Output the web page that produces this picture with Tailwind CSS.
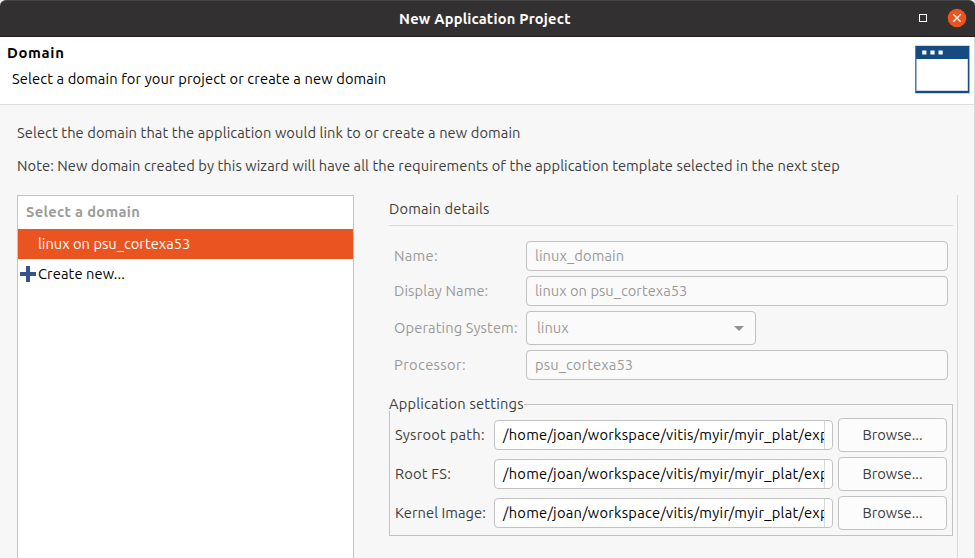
<!DOCTYPE html>
<html lang="en">
<head>
<meta charset="utf-8">
<title>New Application Project</title>
<script src="https://cdn.jsdelivr.net/npm/@tailwindcss/browser@4"></script>
</head>
<body class="w-[975px] h-[558px] overflow-hidden bg-[#f7f7f7] font-['Ubuntu','Noto_Sans',sans-serif] text-[14.667px] leading-5 text-[#3d3d3d] whitespace-nowrap">
<div class="flex flex-col h-[558px] border-r border-[#dadada]">
  <header class="-mr-px h-[37px] shrink-0 flex items-center bg-[#333031] border-t border-t-[#454545] border-b border-b-[#1f1d1e] rounded-t-[6px]">
    <div class="w-[399px] shrink-0"></div>
    <h1 class="grow font-bold text-white tracking-[0.21px]">New Application Project</h1>
    <svg class="w-[60px] h-[35px] shrink-0" viewBox="0 0 60 35" fill="none"><rect x="4.5" y="13.5" width="7" height="7" stroke="#fff"/><circle cx="42" cy="17" r="9.3" fill="#e95420"/><path d="M38.3 13.3l7.4 7.4M45.7 13.3l-7.4 7.4" stroke="#fff" stroke-width="1.3"/></svg>
  </header>
  <section class="h-[68px] shrink-0 flex justify-between bg-white border-b border-[#dcdcdc] text-black">
    <div class="pt-[6px] pl-[7px]">
      <h2 class="font-bold text-[14.9px] leading-5 tracking-[0.65px]">Domain</h2>
      <p class="pl-[5px] pt-[6px] tracking-[0.125px]">Select a domain for your project or create a new domain</p>
    </div>
    <svg class="w-[60px] h-[60px]" viewBox="0 0 60 60" fill="none"><rect x="1" y="8.5" width="55" height="48" fill="#9bb3cf"/><rect x="1.5" y="9" width="53.5" height="47" fill="#164b81"/><rect x="2" y="22" width="52" height="32" fill="#9bb3cf"/><rect x="3" y="22" width="50.5" height="31.5" fill="#fff"/><path d="M8.2 13.4h4.2v4.2h-4.2zM16.4 13.4h4.2v4.2h-4.2zM24.5 13.4h4.2v4.2h-4.2z" fill="#fff"/></svg>
  </section>
  <main class="grow flex flex-col pl-[17px] pt-[18px] min-h-0">
    <p class="tracking-[0.095px]">Select the domain that the application would link to or create a new domain</p>
    <p class="mt-[13px] tracking-[0.074px]">Note: New domain created by this wizard will have all the requirements of the application template selected in the next step</p>
    <div class="mt-[19px] grow flex">
      <div class="w-[337px] shrink-0 bg-white border border-b-0 border-[#c4c4c4]">
        <div class="h-[33px] flex items-center pb-px pl-2 font-bold text-[#9c9c9c] tracking-[0.35px]">Select a domain</div>
        <div class="h-[30px] flex items-center pl-5 bg-[#e95420] text-white tracking-[0.02px]">linux on psu_cortexa53</div>
        <div class="h-[30px] flex items-center pl-[2px] text-black tracking-[0.1px]"><svg class="w-4 h-4 mr-[2px]" viewBox="0 0 16 16"><path d="M6 0h4v6h6v4h-6v6H6v-6H0V6h6z" fill="#34528c"/></svg>Create new...</div>
      </div>
      <div class="ml-[35px] w-[569px] shrink-0 border-r border-[#d8d8d8]">
        <div class="w-[564px]">
          <h3 class="h-[31px] pt-1 border-b border-[#dadada] tracking-[0.17px]">Domain details</h3>
          <div class="mt-[15px] px-[5px] grid grid-cols-[132px_1fr] gap-y-[5px] items-center text-[#9a9a9a]">
            <label class="tracking-[0.3px]">Name:</label>
            <div class="h-[30px] flex items-center pl-2 border border-[#c2c2c2] rounded-[4px] bg-[#fafafa] tracking-[0.1px]">linux_domain</div>
            <label class="tracking-[0.1px]">Display Name:</label>
            <div class="h-[30px] flex items-center pl-2 border border-[#c2c2c2] rounded-[4px] bg-[#fafafa] tracking-[0.02px]">linux on psu_cortexa53</div>
            <label class="tracking-[0.12px]">Operating System:</label>
            <div class="w-[230px] h-[34px] flex items-center justify-between pl-[10px] pr-[11px] border border-[#c2c2c2] rounded-[4px] bg-[#fafafa]">linux<svg class="w-[10px] h-[5px]" viewBox="0 0 10 5"><path d="M0 0h10L5 5z" fill="#929292"/></svg></div>
            <label class="tracking-[0.37px]">Processor:</label>
            <div class="h-[30px] flex items-center pl-2 border border-[#c2c2c2] rounded-[4px] bg-[#fafafa] tracking-[0.12px]">psu_cortexa53</div>
          </div>
          <fieldset class="mt-[17px] h-[139px] border border-[#c2c2c2]">
            <legend class="-ml-px h-[14px] leading-[14px] bg-[#f7f7f7] tracking-[0.2px]">Application settings</legend>
            <div class="mt-[7px] pl-[5px] grid grid-cols-[99px_339px_114px] gap-y-[5px] items-center">
              <label class="tracking-[0.25px]">Sysroot path:</label>
              <div class="h-[30px] flex border border-[#c2c2c2] rounded-[4px] bg-white text-black"><div class="w-[330px] pl-2 border-r border-[#d8d8d8] overflow-hidden leading-[28px] tracking-[0.26px]">/home/joan/workspace/vitis/myir/myir_plat/exp</div></div>
              <button class="ml-[5px] h-[34px] border border-[#c2c2c2] rounded-[4px] bg-[#fcfcfc]">Browse...</button>
              <label class="tracking-[0.2px]">Root FS:</label>
              <div class="h-[30px] flex border border-[#c2c2c2] rounded-[4px] bg-white text-black"><div class="w-[330px] pl-2 border-r border-[#d8d8d8] overflow-hidden leading-[28px] tracking-[0.26px]">/home/joan/workspace/vitis/myir/myir_plat/exp</div></div>
              <button class="ml-[5px] h-[34px] border border-[#c2c2c2] rounded-[4px] bg-[#fcfcfc]">Browse...</button>
              <label class="tracking-[0.06px]">Kernel Image:</label>
              <div class="h-[30px] flex border border-[#c2c2c2] rounded-[4px] bg-white text-black"><div class="w-[330px] pl-2 border-r border-[#d8d8d8] overflow-hidden leading-[28px] tracking-[0.26px]">/home/joan/workspace/vitis/myir/myir_plat/exp</div></div>
              <button class="ml-[5px] h-[34px] border border-[#c2c2c2] rounded-[4px] bg-[#fcfcfc]">Browse...</button>
            </div>
          </fieldset>
        </div>
      </div>
    </div>
  </main>
</div>
</body>
</html>
